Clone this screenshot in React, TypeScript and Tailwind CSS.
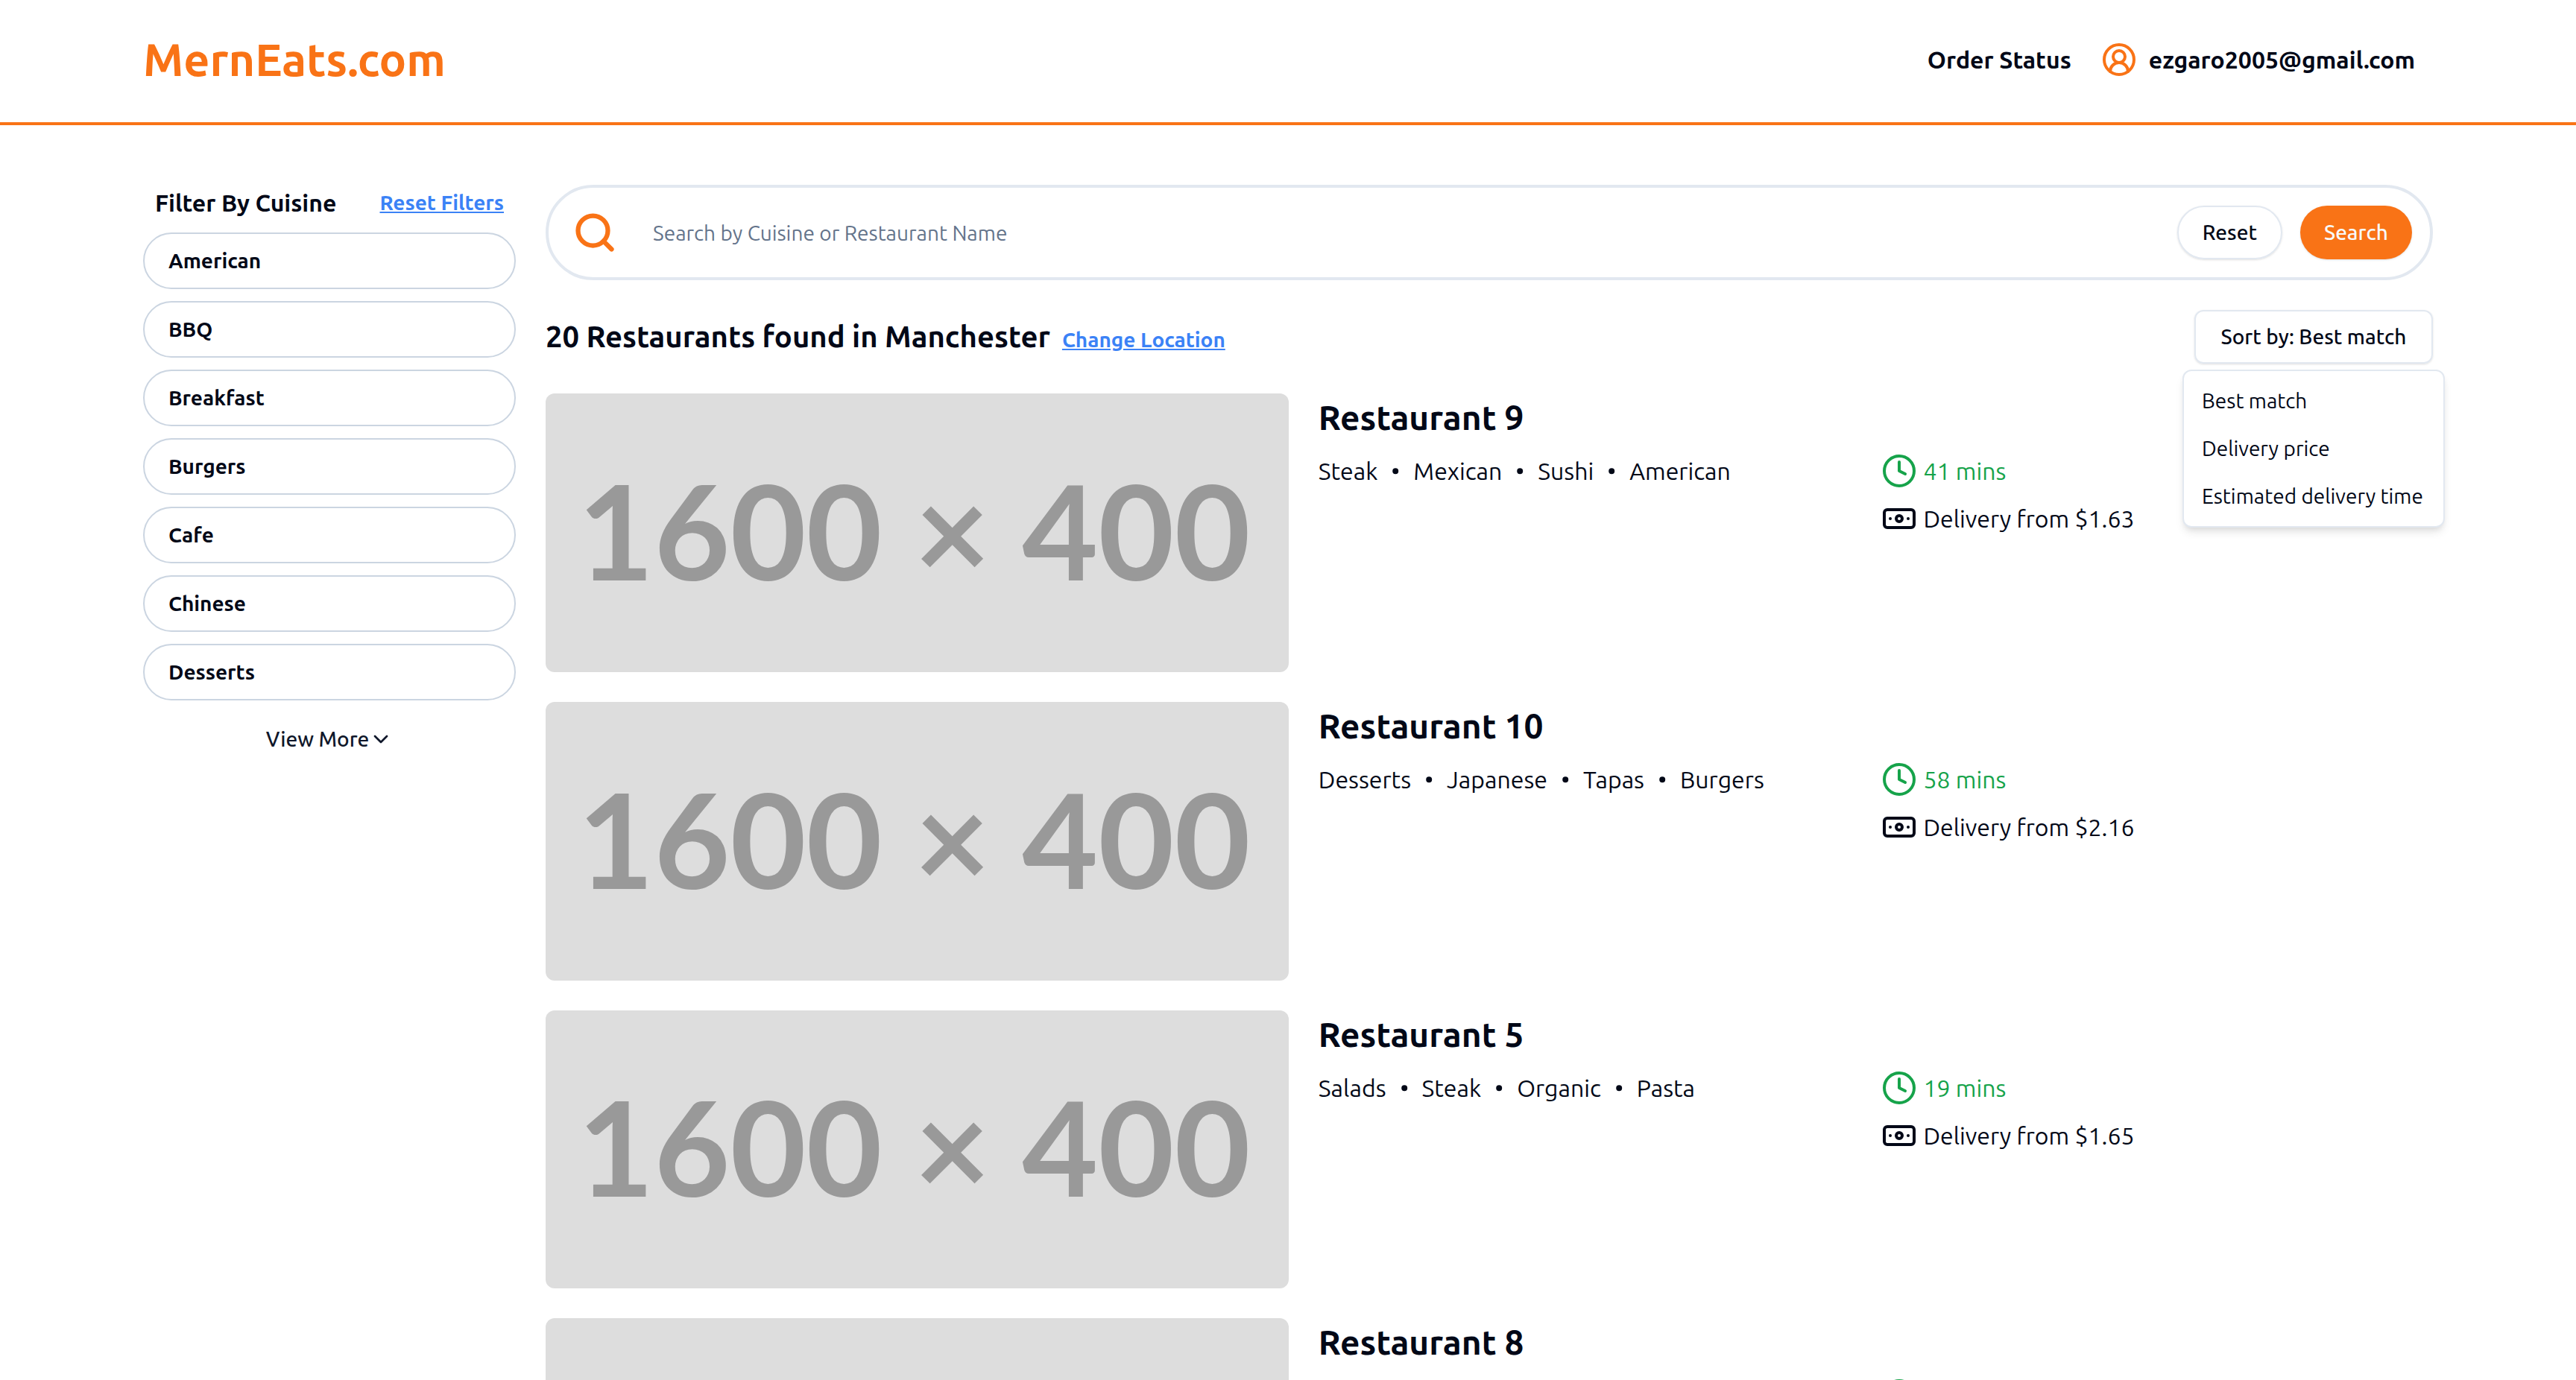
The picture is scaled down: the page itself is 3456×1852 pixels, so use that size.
import { Fragment } from "react";
import { Banknote, ChevronDown, CircleUserRound, Clock, Dot, Search } from "lucide-react";

const cuisineFilters = ["American", "BBQ", "Breakfast", "Burgers", "Cafe", "Chinese", "Desserts"];

const sortOptions = ["Best match", "Delivery price", "Estimated delivery time"];

type Restaurant = {
  name: string;
  cuisines: string[];
  minutes: number;
  deliveryPrice: string;
};

const restaurants: Restaurant[] = [
  { name: "Restaurant 9", cuisines: ["Steak", "Mexican", "Sushi", "American"], minutes: 41, deliveryPrice: "1.63" },
  { name: "Restaurant 10", cuisines: ["Desserts", "Japanese", "Tapas", "Burgers"], minutes: 58, deliveryPrice: "2.16" },
  { name: "Restaurant 5", cuisines: ["Salads", "Steak", "Organic", "Pasta"], minutes: 19, deliveryPrice: "1.65" },
  { name: "Restaurant 8", cuisines: [], minutes: 35, deliveryPrice: "1.90" },
];

function Header() {
  return (
    <header className="border-b-4 border-[#f97316] pt-[46px] pb-[50px]">
      <div className="mx-auto flex max-w-[3072px] items-center justify-between">
        <a href="#" className="text-[61px] leading-[68px] font-bold text-[#f97316]">
          MernEats.com
        </a>
        <nav className="flex items-center gap-10 pr-6 text-[32px] leading-[48px] font-bold">
          <a href="#orders">Order Status</a>
          <button type="button" className="flex items-center gap-4">
            <CircleUserRound className="size-12 text-[#f97316]" />
            ezgaro2005@gmail.com
          </button>
        </nav>
      </div>
    </header>
  );
}

function CuisineFilter() {
  return (
    <aside>
      <div className="mb-4 flex items-center justify-between px-4">
        <h2 className="text-[32px] leading-[48px] font-bold">Filter By Cuisine</h2>
        <button type="button" className="text-[28px] leading-[40px] font-bold text-[#3b82f6] underline">
          Reset Filters
        </button>
      </div>
      <div className="flex flex-col gap-4">
        {cuisineFilters.map((cuisine) => (
          <label
            key={cuisine}
            className="flex cursor-pointer items-center rounded-full border-2 border-[#cbd5e1] px-8 py-4 text-[28px] leading-[40px] font-bold"
          >
            <input type="checkbox" className="sr-only" />
            {cuisine}
          </label>
        ))}
      </div>
      <button
        type="button"
        className="mx-auto mt-4 flex h-[72px] items-center text-[28px] leading-[40px] font-medium text-[#0f172a]"
      >
        View More
        <ChevronDown className="size-8" />
      </button>
    </aside>
  );
}

function SearchBar() {
  return (
    <form
      onSubmit={(event) => event.preventDefault()}
      className="flex items-center gap-6 rounded-full border-4 border-[#e2e8f0] p-6"
    >
      <Search strokeWidth={2.5} className="ml-2 size-[60px] shrink-0 text-[#f97316]" />
      <input
        type="text"
        aria-label="Search by Cuisine or Restaurant Name"
        placeholder="Search by Cuisine or Restaurant Name"
        className="h-[72px] min-w-0 flex-1 px-6 text-[28px] leading-[40px] outline-none placeholder:text-[#64748b]"
      />
      <button
        type="button"
        className="h-[72px] rounded-full border-2 border-[#e2e8f0] px-8 text-[28px] leading-[40px] font-medium shadow-sm"
      >
        Reset
      </button>
      <button
        type="submit"
        className="h-[72px] rounded-full bg-[#f97316] px-8 text-[28px] leading-[40px] font-medium text-[#f8fafc] shadow"
      >
        Search
      </button>
    </form>
  );
}

function SortDropdown() {
  return (
    <div className="relative">
      <button
        type="button"
        aria-haspopup="menu"
        aria-expanded="true"
        className="h-[72px] min-w-80 rounded-xl border-2 border-[#e2e8f0] px-8 text-[28px] leading-[40px] font-medium shadow-sm"
      >
        Sort by: Best match
      </button>
      <div
        role="menu"
        className="absolute top-full left-1/2 z-10 mt-2 min-w-[352px] -translate-x-1/2 rounded-xl border-2 border-[#e2e8f0] bg-white p-2 shadow-[0_8px_12px_-2px_rgb(0_0_0/0.1),0_4px_8px_-4px_rgb(0_0_0/0.1)]"
      >
        {sortOptions.map((option) => (
          <button
            key={option}
            type="button"
            role="menuitem"
            className="block w-full px-4 py-3 text-left text-[28px] leading-[40px] whitespace-nowrap"
          >
            {option}
          </button>
        ))}
      </div>
    </div>
  );
}

function RestaurantCard({ restaurant }: { restaurant: Restaurant }) {
  return (
    <article className="grid grid-cols-[2fr_3fr] gap-10">
      <div
        role="img"
        aria-label={restaurant.name}
        className="flex aspect-[16/6] items-center justify-center rounded-xl bg-[#dddddd] pr-2 pb-2 font-['Lato',sans-serif] text-[176px] leading-none font-bold whitespace-nowrap text-[#999999]"
      >
        1600 × 400
      </div>
      <div>
        <h3 className="mb-4 text-[46px] leading-[64px] font-bold">{restaurant.name}</h3>
        <div className="grid grid-cols-2 gap-4 text-[32px] leading-[48px]">
          <div className="flex items-center self-start">
            {restaurant.cuisines.map((cuisine, index) => (
              <Fragment key={cuisine}>
                <span>{cuisine}</span>
                {index < restaurant.cuisines.length - 1 && <Dot className="size-12" />}
              </Fragment>
            ))}
          </div>
          <div className="flex flex-col gap-4">
            <div className="flex items-center gap-2 text-[#16a34a]">
              <Clock className="size-12" />
              {restaurant.minutes} mins
            </div>
            <div className="flex items-center gap-2">
              <Banknote className="size-12" />
              Delivery from ${restaurant.deliveryPrice}
            </div>
          </div>
        </div>
      </div>
    </article>
  );
}

export default function App() {
  return (
    <div className="h-screen overflow-hidden bg-white font-['Ubuntu','Noto_Sans',sans-serif] text-[#020817]">
      <Header />
      <main className="mx-auto grid max-w-[3072px] grid-cols-[500px_1fr] gap-10 py-20">
        <CuisineFilter />
        <div className="flex flex-col gap-10">
          <SearchBar />
          <div className="flex items-center justify-between">
            <div className="flex items-baseline gap-4">
              <h1 className="text-[40px] leading-[56px] font-bold">20 Restaurants found in Manchester</h1>
              <a href="#location" className="text-[28px] leading-[40px] font-bold text-[#3b82f6] underline">
                Change Location
              </a>
            </div>
            <SortDropdown />
          </div>
          {restaurants.map((restaurant) => (
            <RestaurantCard key={restaurant.name} restaurant={restaurant} />
          ))}
        </div>
      </main>
    </div>
  );
}
